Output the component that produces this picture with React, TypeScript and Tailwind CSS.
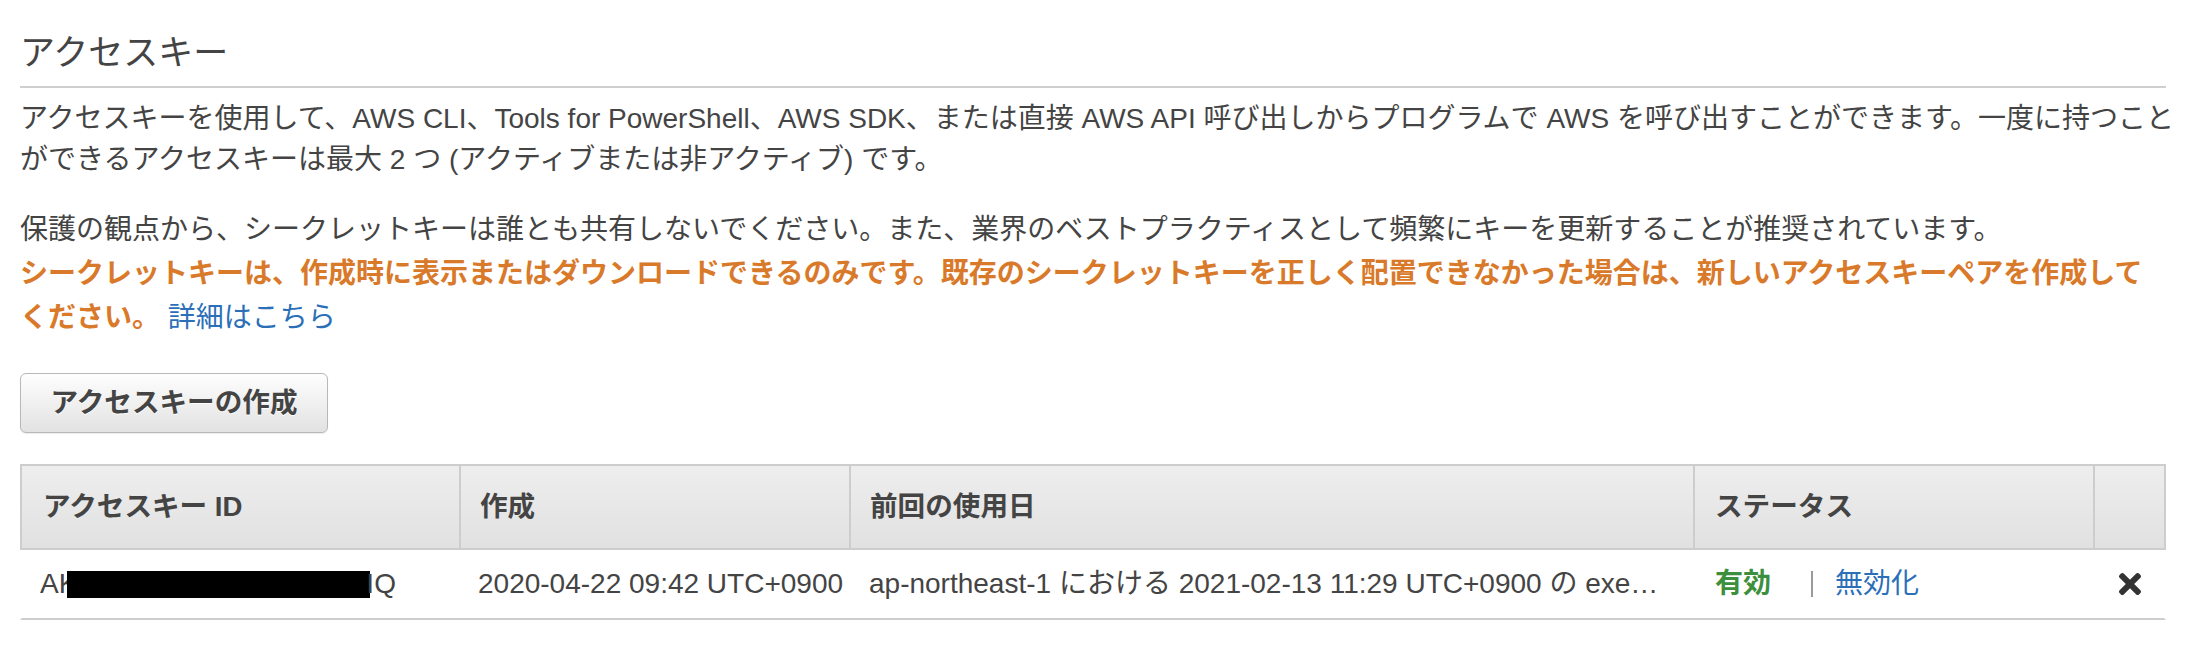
import { FaTimes } from "react-icons/fa";

export default function App() {
  return (
    <div className="min-h-[658px] bg-white pl-[20px] pr-[24px] pt-[30px] text-[#444] font-['Liberation_Sans','Noto_Sans_CJK_JP',sans-serif]">
      <h2 className="border-b-2 border-[#cfcfcf] pb-[10px] text-[35px] leading-[46px] font-normal">
        アクセスキー
      </h2>

      <p className="mt-[10px] text-[28px] leading-[41px]">
        <span className="whitespace-nowrap">
          アクセスキーを使用して、AWS CLI、Tools for PowerShell、AWS SDK、または直接 AWS API 呼び出しからプログラムで AWS を呼び出すことができます。一度に持つこと
        </span>
        <br />
        ができるアクセスキーは最大 2 つ (アクティブまたは非アクティブ) です。
      </p>

      <p className="mt-[28px] text-[28px] leading-[44px]">
        保護の観点から、シークレットキーは誰とも共有しないでください。また、業界のベストプラクティスとして頻繁にキーを更新することが推奨されています。
        <br />
        <span className="font-bold text-[#d97a2b]">
          <span className="whitespace-nowrap">
            シークレットキーは、作成時に表示またはダウンロードできるのみです。既存のシークレットキーを正しく配置できなかった場合は、新しいアクセスキーペアを作成して
          </span>
          <br />
          ください。
        </span>{" "}
        <a className="text-[#2b6fb9]">詳細はこちら</a>
      </p>

      <button className="mt-[33px] flex h-[60px] w-[308px] items-center justify-center rounded-[6px] border border-[#b8b8b8] bg-gradient-to-b from-[#fefefe] to-[#e2e2e2] text-[27.6px] font-bold text-[#444] shadow-[0_1px_1px_rgba(0,0,0,0.08)] [text-shadow:0_1px_0_#fff]">
        アクセスキーの作成
      </button>

      <div className="mt-[31px] w-[2146px]">
        <div className="grid h-[86px] grid-cols-[439px_390px_844px_400px_1fr] border-2 border-[#cdcdcd] bg-gradient-to-b from-[#eeeeee] to-[#e1e1e1] text-[27.6px] font-bold">
          <div className="flex items-center border-r-2 border-[#cdcdcd] pl-[21px]">アクセスキー ID</div>
          <div className="flex items-center border-r-2 border-[#cdcdcd] pl-[19px]">作成</div>
          <div className="flex items-center border-r-2 border-[#cdcdcd] pl-[19px]">前回の使用日</div>
          <div className="flex items-center border-r-2 border-[#cdcdcd] pl-[20px]">ステータス</div>
          <div />
        </div>
        <div className="grid h-[70px] grid-cols-[439px_390px_844px_400px_1fr] border-x-2 border-b-2 border-x-transparent border-b-[#cdcdcd] text-[28px]">
          <div className="flex items-center pl-[18px]">
            <span>AK</span>
            <span className="ml-[-10px] inline-block h-[27px] w-[303px] bg-black" />
            <span className="ml-[-4px]">IQ</span>
          </div>
          <div className="flex items-center pl-[17px] whitespace-nowrap">2020-04-22 09:42 UTC+0900</div>
          <div className="flex min-w-0 items-center pl-[18px] pr-[28px]">
            <span className="truncate">
              ap-northeast-1 における 2021-02-13 11:29 UTC+0900 の execute-api
            </span>
          </div>
          <div className="flex items-center pl-[20px]">
            <span className="font-bold text-[#3c8f3c]">有効</span>
            <span className="ml-[40px] inline-block h-[26px] w-[2px] bg-[#9a9a9a]" />
            <span className="ml-[22px] text-[#2b6fb9]">無効化</span>
          </div>
          <div className="flex items-center justify-center">
            <FaTimes className="text-[#333]" size={32} />
          </div>
        </div>
      </div>
    </div>
  );
}
